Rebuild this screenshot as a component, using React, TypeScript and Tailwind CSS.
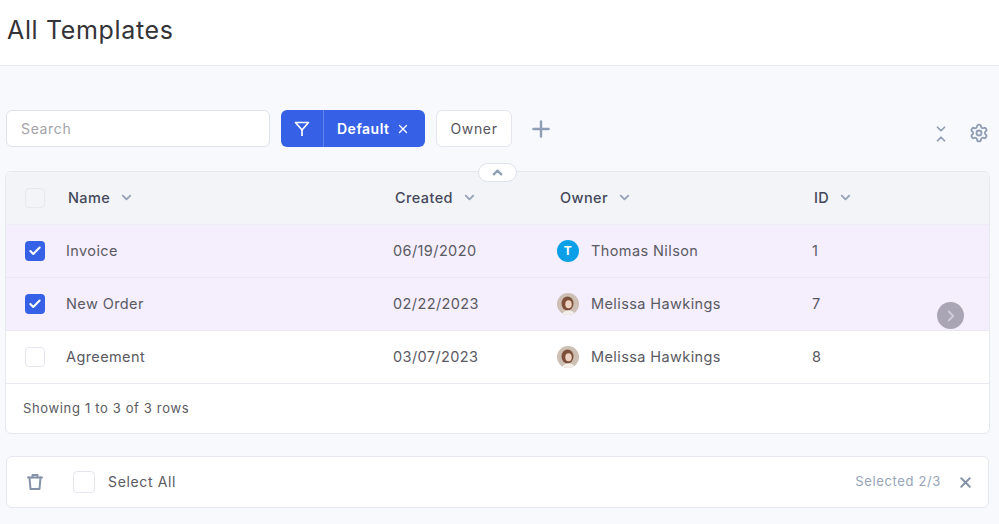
import { ChevronDown, ChevronUp, ChevronRight, Plus, X, Settings, Check } from 'lucide-react'

interface Row {
  name: string
  created: string
  owner: string
  id: number
  selected: boolean
  initial?: string
}

const rows: Row[] = [
  { name: 'Invoice', created: '06/19/2020', owner: 'Thomas Nilson', id: 1, selected: true, initial: 'T' },
  { name: 'New Order', created: '02/22/2023', owner: 'Melissa Hawkings', id: 7, selected: true },
  { name: 'Agreement', created: '03/07/2023', owner: 'Melissa Hawkings', id: 8, selected: false },
]

function PhotoAvatar() {
  return (
    <svg width="22" height="22" viewBox="0 0 22 22" className="shrink-0 rounded-full">
      <rect width="22" height="22" fill="#cdbfb4" />
      <g className="blur-[0.6px]">
        <ellipse cx="10.500" cy="10.500" rx="6" ry="7" fill="#7f5039" />
        <ellipse cx="11.500" cy="11.200" rx="3.200" ry="4" fill="#ecd3c2" />
        <path d="M5 22c1-3.500 3.500-4.500 6.500-4.500s5.500 1 6.500 4.500z" fill="#f3eee9" />
      </g>
    </svg>
  )
}

function HeaderCell({ label, className }: { label: string; className: string }) {
  return (
    <div className={`flex items-center gap-[9px] pb-[1px] text-[14.5px] font-medium tracking-[0.4px] text-[#45485a] ${className}`}>
      {label}
      <ChevronDown size={15} strokeWidth={3} className="text-[#97a3b8]" />
    </div>
  )
}

export default function App() {
  return (
    <div className="h-[524px] w-[999px] overflow-hidden bg-[#f8f9fd] font-['Inter',sans-serif] tracking-[0.65px]">
      <header className="flex h-[66px] items-center border-b border-[#e6e8f0] bg-white pb-[3px] pl-[7px]">
        <h1 className="text-[25px] font-normal text-[#333338]">All Templates</h1>
      </header>

      <div className="mt-[44px] flex h-[61px] pl-[6px] pr-[10px]">
        <input
          placeholder="Search"
          className="h-[37px] w-[264px] rounded-md border border-[#dfe2ec] bg-white px-[14px] text-sm outline-none placeholder:text-[#a3a3a8]"
        />
        <div className="ml-[11px] flex h-[37px] w-[144px] items-center rounded-md bg-[#3661e6] text-white">
          <div className="flex h-full w-[43px] items-center justify-center border-r border-[#5f82ec]">
            <svg width="16" height="16" viewBox="0 0 16 16" fill="none" stroke="currentColor" strokeWidth="1.700" strokeLinejoin="round">
              <path d="M1.500 1.500h13L8 9z" />
              <path d="M8 9v6" />
            </svg>
          </div>
          <span className="ml-[13px] text-sm font-semibold tracking-[0.5px]">Default</span>
          <X size={14} strokeWidth={2.4} className="ml-[6px]" />
        </div>
        <div className="ml-[11px] flex h-[37px] w-[76px] items-center justify-center rounded-md border border-[#e4e6ef] bg-white text-sm text-[#55555c]">
          Owner
        </div>
        <Plus size={26} strokeWidth={2.200} className="ml-[16px] mt-[6px] text-[#8f9db5]" />
        <div className="ml-auto mt-[13px] flex h-[20px] items-start gap-[21px] text-[#8f9db5]">
          <div className="-mt-[1px] flex w-[14px] flex-col items-center">
            <ChevronDown size={14} strokeWidth={3} className="-mb-[4px]" />
            <ChevronUp size={14} strokeWidth={3} />
          </div>
          <Settings size={20} strokeWidth={2.200} />
        </div>
      </div>

      <div className="relative ml-[5px] h-[263px] w-[985px] rounded-md border border-[#e6e8f0] bg-white">
        <div className="absolute -top-[9px] left-[472px] flex h-[19px] w-[39px] items-center justify-center rounded-full border border-[#dfe2ec] bg-white">
          <ChevronUp size={15} strokeWidth={3.500} className="text-[#8f9db5]" />
        </div>

        <div className="flex h-[53px] items-center rounded-t-md border-b border-[#eceef4] bg-[#f2f4f8]">
          <div className="ml-[19px] h-[20px] w-[20px] rounded border border-[#e6e8f0]" />
          <HeaderCell label="Name" className="ml-[23px] w-[327px]" />
          <HeaderCell label="Created" className="w-[165px]" />
          <HeaderCell label="Owner" className="w-[254px]" />
          <HeaderCell label="ID" className="w-[60px]" />
        </div>

        {rows.map((row) => (
          <div
            key={row.id}
            className={`flex h-[53px] items-center border-b border-[#e9e9f1] text-[14.5px] tracking-[0.4px] text-[#5a5a62] ${row.selected ? 'bg-[#f4eefd]' : 'bg-white'}`}
          >
            {row.selected ? (
              <div className="ml-[19px] flex h-[20px] w-[20px] items-center justify-center rounded bg-[#3661e6]">
                <Check size={14} strokeWidth={3.500} className="text-white" />
              </div>
            ) : (
              <div className="ml-[19px] h-[20px] w-[20px] rounded border border-[#e4e6ef] bg-white" />
            )}
            <div className="ml-[21px] w-[327px]">{row.name}</div>
            <div className="w-[164px]">{row.created}</div>
            <div className="flex w-[255px] items-center gap-[12px]">
              {row.initial ? (
                <div className="flex h-[22px] w-[22px] shrink-0 items-center justify-center rounded-full bg-[#0b9fe8] text-[12px] font-bold text-white">
                  {row.initial}
                </div>
              ) : (
                <PhotoAvatar />
              )}
              {row.owner}
            </div>
            <div>{row.id}</div>
          </div>
        ))}

        <div className="absolute left-[931px] top-[130px] flex h-[27px] w-[27px] items-center justify-center rounded-full bg-[#a9a5b5]">
          <ChevronRight size={18} strokeWidth={2.500} className="text-[#cfcbd8]" />
        </div>

        <div className="flex h-[49px] items-center pl-[17px] text-[13px] text-[#5a5a62]">Showing 1 to 3 of 3 rows</div>
      </div>

      <div className="ml-[6px] mt-[22px] flex h-[52px] w-[983px] items-center rounded-md border border-[#e6e8f0] bg-white pr-[14px]">
        <svg width="18" height="18" viewBox="0 0 18 18" fill="none" stroke="#8593a8" strokeWidth="2" strokeLinecap="round" strokeLinejoin="round" className="ml-[19px]">
          <path d="M2 4.500h14" />
          <path d="M6.500 4.500V2h5v2.500" />
          <path d="M3.500 4.500l1 11.500h9l1-11.500" />
        </svg>
        <div className="ml-[29px] h-[22px] w-[22px] rounded border border-[#e4e6ef]" />
        <span className="ml-[13px] text-sm text-[#5a5a62]">Select All</span>
        <span className="ml-auto text-[13px] text-[#97a3b8]">Selected 2/3</span>
        <X size={17} strokeWidth={2.800} className="ml-[16px] text-[#8593a8]" />
      </div>
    </div>
  )
}
